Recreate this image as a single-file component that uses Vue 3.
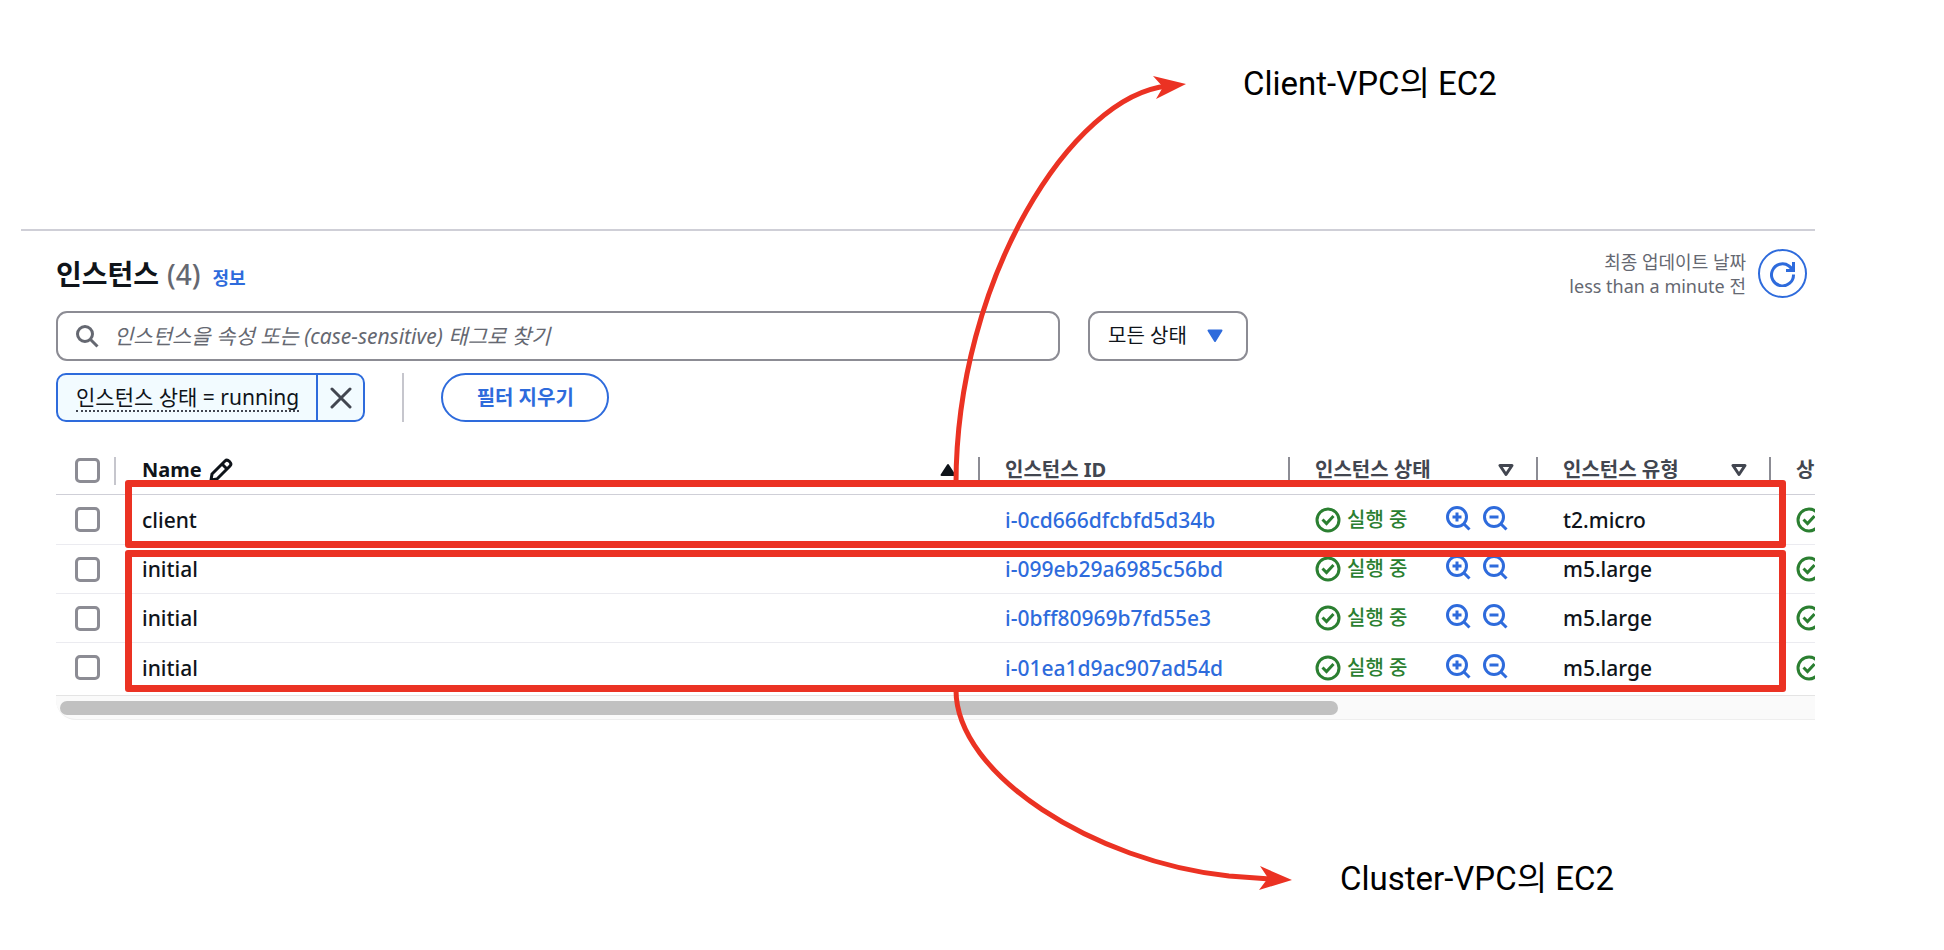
<script setup>
import { ref } from 'vue'

const query = ref('')
const state = ref('all')
const instances = [
  { name: 'client', id: 'i-0cd666dfcbfd5d34b', type: 't2.micro' },
  { name: 'initial', id: 'i-099eb29a6985c56bd', type: 'm5.large' },
  { name: 'initial', id: 'i-0bff80969b7fd55e3', type: 'm5.large' },
  { name: 'initial', id: 'i-01ea1d9ac907ad54d', type: 'm5.large' },
]
</script>

<template>
  <main class="canvas">
    <section class="panel">
      <header class="heading">
        <h1>인스턴스 <span class="count">(4)</span></h1>
        <a class="info" href="#">정보</a>
        <p class="updated">최종 업데이트 날짜<br />less than a minute 전</p>
        <button class="refresh" type="button" aria-label="새로 고침">
          <svg width="26" height="26" viewBox="0 0 26 26" fill="none" stroke="currentColor" stroke-width="3">
            <path d="M23.500 13.500a11 11 0 1 1-4.500-8.500l4 3.500" />
            <path d="M23.500 1v8.500H16" />
            <path d="M18.500 8.500l5-4v4z" fill="currentColor" stroke="none" />
          </svg>
        </button>
      </header>

      <div class="filters">
        <label class="search">
          <svg width="24" height="24" viewBox="0 0 24 24" fill="none" stroke="currentColor" stroke-width="3">
            <circle cx="10" cy="10" r="7.500" />
            <path d="M15.500 15.500l7 7" />
          </svg>
          <input v-model="query" type="text" placeholder="인스턴스을 속성 또는 (case-sensitive) 태그로 찾기" aria-label="인스턴스 찾기" />
        </label>
        <div class="select">
          <select v-model="state" aria-label="상태">
            <option value="all">모든 상태</option>
          </select>
          <svg width="16" height="14" viewBox="0 0 16 14"><path d="M1.500 1.500h13L8 12z" fill="currentColor" stroke="currentColor" stroke-width="2" stroke-linejoin="round" /></svg>
        </div>
      </div>

      <div class="tokens">
        <div class="token">
          <button class="token-label" type="button"><span>인스턴스 상태 = running</span></button>
          <button class="token-close" type="button" aria-label="필터 제거">
            <svg width="22" height="22" viewBox="0 0 22 22" fill="none" stroke="currentColor" stroke-width="3" stroke-linecap="round"><path d="M2 2l18 18M20 2L2 20" /></svg>
          </button>
        </div>
        <span class="rule"></span>
        <button class="clear" type="button">필터 지우기</button>
      </div>

      <div class="table-area">
        <table>
          <colgroup>
            <col class="c-check" /><col /><col class="c-id" /><col class="c-state" /><col class="c-type" /><col class="c-status" />
          </colgroup>
          <thead>
            <tr>
              <th class="check light"><input type="checkbox" aria-label="모두 선택" /></th>
              <th class="sorted">
                <div class="th">
                  <span>Name</span>
                  <svg class="pencil" width="24" height="24" viewBox="0 0 24 24" fill="none" stroke="currentColor" stroke-width="3" stroke-linejoin="round">
                    <path d="M2 22l1-6L16 3q2-2 4.500.500T21 8L8 21z" />
                    <path d="M13 6l5 5" />
                  </svg>
                  <svg class="sort" width="16" height="14" viewBox="0 0 16 14"><path d="M1.500 12h13L8 2z" fill="currentColor" stroke="currentColor" stroke-width="2" stroke-linejoin="round" /></svg>
                </div>
              </th>
              <th>인스턴스 ID</th>
              <th v-for="label in ['인스턴스 상태', '인스턴스 유형']" :key="label">
                <div class="th">
                  <span>{{ label }}</span>
                  <svg class="sort" width="16" height="14" viewBox="0 0 16 14"><path d="M2 2.500h12L8 11.500z" fill="none" stroke="currentColor" stroke-width="3" stroke-linejoin="round" /></svg>
                </div>
              </th>
              <th class="last">상</th>
            </tr>
          </thead>
          <tbody>
            <tr v-for="item in instances" :key="item.id">
              <td class="check"><input type="checkbox" :aria-label="item.id" /></td>
              <td class="name">{{ item.name }}</td>
              <td><a href="#">{{ item.id }}</a></td>
              <td>
                <div class="state">
                  <svg width="26" height="26" viewBox="0 0 26 26" fill="none" stroke="currentColor" stroke-width="3">
                    <circle cx="13" cy="13" r="11" />
                    <path d="M7.500 12.500l4 4 7-7.500" />
                  </svg>
                  <span>실행 중</span>
                  <span class="zooms">
                    <button type="button" aria-label="필터에 포함">
                      <svg width="26" height="26" viewBox="0 0 26 26" fill="none" stroke="currentColor" stroke-width="3">
                        <circle cx="12" cy="12" r="9.500" /><path d="M18.500 18.500l6 6M12 7.500v9M7.500 12h9" />
                      </svg>
                    </button>
                    <button type="button" aria-label="필터에서 제외">
                      <svg width="26" height="26" viewBox="0 0 26 26" fill="none" stroke="currentColor" stroke-width="3">
                        <circle cx="12" cy="12" r="9.500" /><path d="M18.500 18.500l6 6M7.500 12h9" />
                      </svg>
                    </button>
                  </span>
                </div>
              </td>
              <td>{{ item.type }}</td>
              <td class="last">
                <div class="state">
                  <svg width="26" height="26" viewBox="0 0 26 26" fill="none" stroke="currentColor" stroke-width="3">
                    <circle cx="13" cy="13" r="11" />
                    <path d="M7.500 12.500l4 4 7-7.500" />
                  </svg>
                </div>
              </td>
            </tr>
          </tbody>
        </table>
        <div class="track"><div class="thumb"></div></div>
        <div class="mark mark-client"></div>
        <div class="mark mark-cluster"></div>
      </div>
    </section>

    <svg class="arrows" width="1944" height="950" viewBox="0 0 1944 950" aria-hidden="true">
      <g fill="none" stroke="#eb3223" stroke-width="5">
        <path d="M956 484C956 280 1072 95 1168 86" />
        <path d="M956 690C956 775 1095 862 1229 876L1270 879" />
      </g>
      <g fill="#eb3223">
        <path d="M1186 84L1153 76L1163 87L1156 99z" />
        <path d="M1292 880L1260 866L1268 878L1259 890z" />
      </g>
    </svg>
    <p class="note note-client">Client-VPC의 EC2</p>
    <p class="note note-cluster">Cluster-VPC의 EC2</p>
  </main>
</template>

<style>
body {
  background: #fff;
}
</style>

<style scoped>
.canvas {
  position: relative;
  box-sizing: border-box;
  min-height: 100vh;
  padding: 229px 129px 0 21px;
  overflow: hidden;
  font-family: "Noto Sans", "Noto Sans CJK KR", sans-serif;
  font-size: 20px;
  line-height: 28px;
  color: #0f141a;
}
.canvas * {
  box-sizing: border-box;
}
button, input, select {
  margin: 0;
  padding: 0;
  border: 0;
  background: none;
  font: inherit;
  color: inherit;
}
svg {
  display: block;
  flex: none;
}
a {
  color: #2e6bdc;
  text-decoration: none;
}
.panel {
  padding-left: 35px;
  border-top: 2px solid #cfcfd7;
}
.heading {
  display: flex;
  align-items: center;
  padding: 18px 8px 0 0;
}
h1 {
  display: flex;
  gap: 8px;
  margin: 0;
  font-size: 28px;
  line-height: 36px;
  font-weight: 700;
}
.count {
  font-weight: 500;
  color: #656871;
}
.info {
  margin: 8px 0 0 12px;
  font-size: 18px;
  line-height: 24px;
  font-weight: 700;
}
.updated {
  margin: 0 12px 0 auto;
  font-size: 18px;
  line-height: 24px;
  text-align: right;
  color: #656871;
}
.refresh {
  display: grid;
  place-items: center;
  width: 49px;
  height: 49px;
  border: 2px solid #2e6bdc;
  border-radius: 50%;
  color: #2e6bdc;
}
.filters {
  display: flex;
  gap: 28px;
  padding: 13px 567px 0 0;
}
.search {
  display: flex;
  flex: 1;
  align-items: center;
  gap: 15px;
  height: 50px;
  padding: 0 17px;
  border: 2px solid #8c8c94;
  border-radius: 11px;
  color: #656871;
}
.search input {
  flex: 1;
  min-width: 0;
  font-size: 21px;
  outline: none;
}
.search input::placeholder {
  color: #656871;
  font-style: italic;
  opacity: 1;
}
.select {
  position: relative;
  width: 160px;
  color: #2e6bdc;
}
.select select {
  width: 100%;
  height: 50px;
  padding: 0 18px;
  border: 2px solid #8c8c94;
  border-radius: 11px;
  appearance: none;
  color: #0f141a;
}
.select svg {
  position: absolute;
  right: 25px;
  top: 18px;
  pointer-events: none;
}
.tokens {
  display: flex;
  align-items: center;
  padding: 12px 0 24px;
}
.token {
  display: flex;
  height: 49px;
  border: 2px solid #2e6bdc;
  border-radius: 10px;
  background: #f2fbff;
}
.token-label {
  padding: 0 17px 0 18px;
  font-size: 21px;
}
.token-label span {
  display: block;
  line-height: 26px;
  border-bottom: 2px dotted #424650;
}
.token-close {
  display: grid;
  place-items: center;
  width: 47px;
  border-left: 2px solid #2e6bdc;
  color: #424650;
}
.rule {
  width: 2px;
  height: 49px;
  margin: 0 37px;
  background: #c6c6cd;
}
.clear {
  width: 168px;
  height: 49px;
  border: 2px solid #2e6bdc;
  border-radius: 25px;
  font-weight: 700;
  color: #2e6bdc;
}
.table-area {
  position: relative;
}
table {
  width: 100%;
  border-collapse: separate;
  border-spacing: 0;
  table-layout: fixed;
}
.c-check { width: 60px; }
.c-id { width: 310px; }
.c-state { width: 248px; }
.c-type { width: 233px; }
.c-status { width: 44px; }
th, td {
  height: 49px;
  padding: 0 24px 0 25px;
  border-bottom: 1px solid #ebebf0;
  text-align: left;
  vertical-align: middle;
  white-space: nowrap;
  overflow: hidden;
}
td {
  font-size: 21px;
  font-weight: 500;
}
th {
  position: relative;
  border-color: #cfcfd7;
  font-weight: 700;
  color: #424650;
}
tbody tr:first-child td {
  height: 50px;
}
tbody tr:last-child td {
  border-bottom: 0;
}
th:not(.last)::after {
  content: "";
  position: absolute;
  top: 11px;
  right: 0;
  width: 2px;
  height: 28px;
  background: #8c8c94;
}
th.light::after {
  background: #c6c6cd;
}
.sorted, .name {
  padding-left: 26px;
}
.sorted {
  color: #0f141a;
}
th.check, td.check {
  padding: 0 0 0 19px;
}
.last {
  padding-right: 0;
}
.th {
  display: flex;
  align-items: center;
}
.pencil {
  margin-left: 7px;
}
.sort {
  margin-left: auto;
}
input[type="checkbox"] {
  display: block;
  width: 25px;
  height: 25px;
  border: 3px solid #8c8c94;
  border-radius: 5px;
  background: #fff;
  appearance: none;
}
.state {
  display: flex;
  align-items: center;
  gap: 6px;
  font-size: 20px;
  color: #2b7f31;
}
.zooms {
  display: flex;
  gap: 11px;
  margin-left: auto;
  padding: 0 6px 4px 0;
}
.zooms button {
  color: #2e6bdc;
}
.track {
  height: 25px;
  margin-top: 3px;
  padding: 5px 4px;
  border-top: 1px solid #e4e4e4;
  border-bottom: 1px solid #eee;
  border-bottom-left-radius: 20px;
  background: #fafafa;
}
.thumb {
  width: 73%;
  height: 14px;
  border-radius: 7px;
  background: #c1c1c1;
}
.mark {
  position: absolute;
  left: 69px;
  right: 29px;
  border: 7px solid #eb3223;
  border-radius: 3px;
}
.mark-client {
  top: 34px;
  height: 68px;
}
.mark-cluster {
  top: 104px;
  height: 142px;
}
.arrows {
  position: absolute;
  top: 0;
  left: 0;
  pointer-events: none;
}
.note {
  position: absolute;
  margin: 0;
  font-family: Roboto, "Noto Sans CJK KR", sans-serif;
  font-size: 33px;
  line-height: 40px;
  color: #000;
  white-space: nowrap;
}
.note-client {
  left: 1243px;
  top: 64px;
}
.note-cluster {
  left: 1340px;
  top: 859px;
}
</style>
